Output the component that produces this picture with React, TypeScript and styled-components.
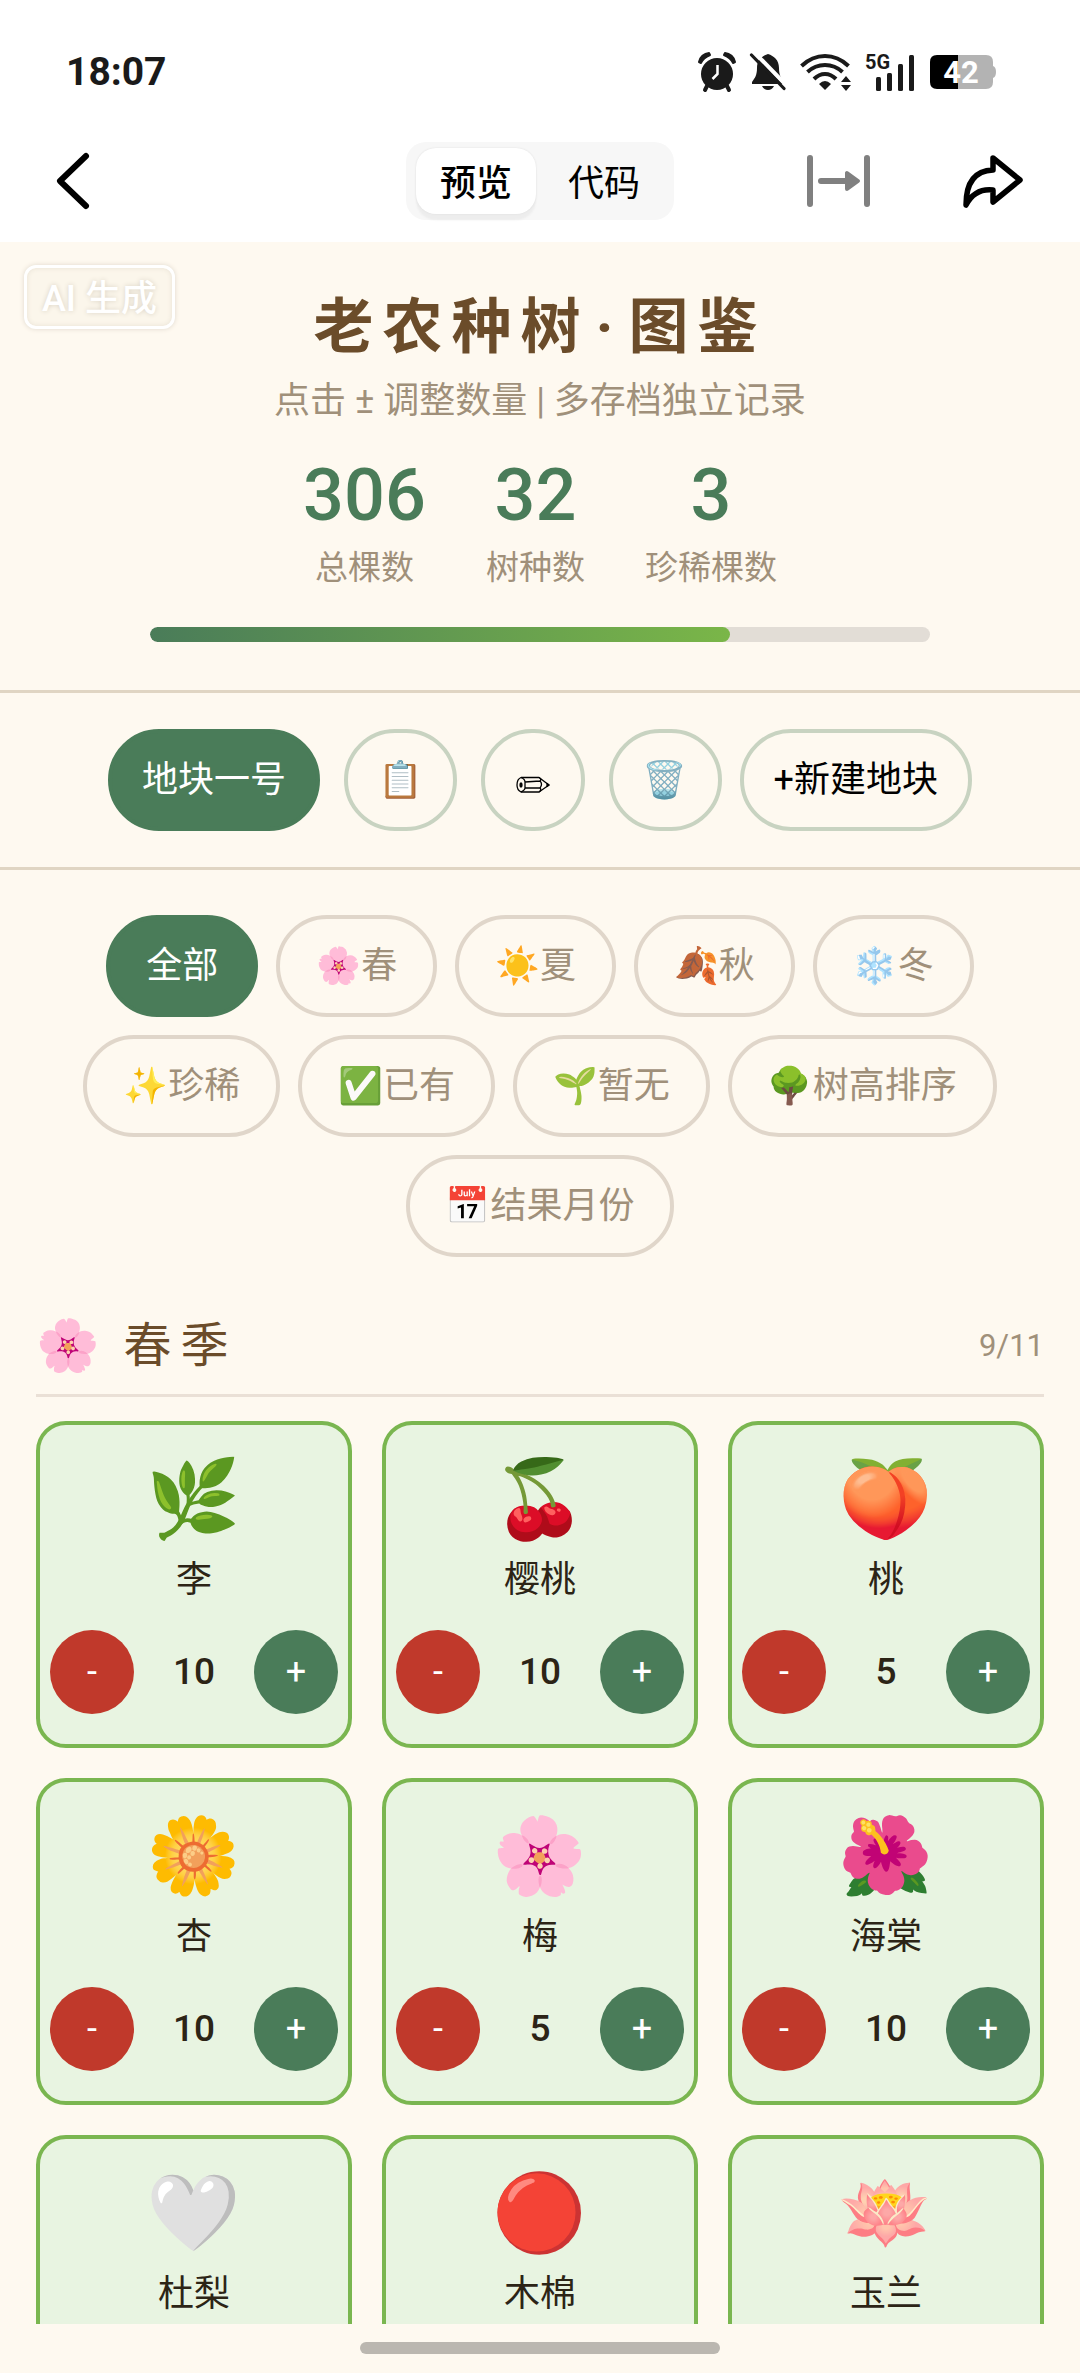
import React, { useState } from "react";
import styled, { createGlobalStyle } from "styled-components";

const GlobalStyle = createGlobalStyle`
  *, *::before, *::after { box-sizing: border-box; }
  body {
    margin: 0;
    background: #fef9f0;
    color: #2c2416;
    font-family: Roboto, "Noto Sans CJK SC", "Noto Color Emoji", sans-serif;
    font-size: 36px;
    line-height: 46px;
  }
  h1, h2, h3, p, dl, dd { margin: 0; font-size: inherit; font-weight: inherit; }
  button { font: inherit; color: inherit; cursor: pointer; }
  svg { display: block; overflow: visible; }
`;

const Screen = styled.div`
  display: flex;
  flex-direction: column;
  height: 100vh;
  overflow: hidden;
`;

const StatusBar = styled.header`
  display: flex;
  align-items: center;
  justify-content: space-between;
  height: 142px;
  padding: 2px 84px 0 66px;
  background: #fff;
  flex: none;
`;

const Clock = styled.time`
  color: #1a1a1a;
  font-size: 39px;
  font-weight: 700;
`;

const StatusIcons = styled.div`
  display: flex;
  align-items: center;
  gap: 14px;
`;

const Toolbar = styled.nav`
  display: grid;
  grid-template-columns: 1fr auto 1fr;
  align-items: center;
  height: 100px;
  padding: 0 56px 22px;
  background: #fff;
  flex: none;
`;

const IconButton = styled.button`
  display: flex;
  padding: 0;
  border: 0;
  background: none;
`;

const ToolbarActions = styled.div`
  display: flex;
  justify-content: flex-end;
  gap: 90px;
`;

const Segments = styled.div`
  display: flex;
  gap: 8px;
  padding: 6px 10px;
  border-radius: 20px;
  background: #f7f7f7;
`;

const Segment = styled.button<{ $active: boolean }>`
  width: 120px;
  height: 66px;
  padding: 6px 0 0;
  border: 0;
  border-radius: 20px;
  color: #000;
  font-weight: ${(p) => (p.$active ? 500 : 400)};
  background: ${(p) => (p.$active ? "#fff" : "none")};
  box-shadow: ${(p) => (p.$active ? "0 0 2px #ddd, 0 6px 2px #ededed" : "none")};
`;

const Page = styled.main`
  position: relative;
  flex: 1;
  min-height: 0;
  overflow-y: auto;
  scrollbar-width: none;
`;

const Watermark = styled.span`
  position: absolute;
  top: 23px;
  left: 24px;
  padding: 8px 15px 4px;
  border: 3px solid #fff;
  border-radius: 12px;
  color: #fff;
  font-weight: 500;
  background: #fbf6eb;
  box-shadow: 0 0 5px #e0d8cc, inset 0 0 5px #e8e0d4;
  text-shadow: 0 0 5px #d8d0c2;
`;

const Summary = styled.section`
  display: flex;
  flex-direction: column;
  align-items: center;
  padding: 48px 36px 48px;
  border-bottom: 3px solid #e0d5c3;
`;

const Title = styled.h1`
  color: #6b4c2a;
  font-size: 60px;
  font-weight: 700;
  line-height: 76px;
  letter-spacing: 9px;
`;

const TitleDot = styled.span`
  padding: 0 6px;
`;

const Subtitle = styled.p`
  margin-top: 12px;
  color: #a0907a;
`;

const Stats = styled.dl`
  display: flex;
  gap: 60px;
  margin-top: 23px;
`;

const Stat = styled.div`
  display: flex;
  flex-direction: column-reverse;
  align-items: center;
`;

const StatLabel = styled.dt`
  color: #a0907a;
  font-size: 33px;
`;

const StatValue = styled.dd`
  color: #4a7c59;
  font-size: 72px;
  font-weight: 500;
  line-height: 98px;
`;

const Track = styled.div`
  width: 780px;
  max-width: 100%;
  height: 15px;
  margin-top: 36px;
  border-radius: 9px;
  background: #e2ddd6;
  overflow: hidden;
`;

const Fill = styled.div`
  height: 100%;
  border-radius: 9px;
  background: linear-gradient(90deg, #4a7c59, #7ab648);
`;

const PlotBar = styled.section`
  display: flex;
  justify-content: center;
  gap: 18px;
  padding: 36px;
  border-bottom: 3px solid #e0d5c3;
`;

const PlotGroup = styled.div`
  display: flex;
  gap: 24px;
`;

const Pill = styled.button<{ $active?: boolean }>`
  height: 102px;
  border: 4px solid #c8d3c1;
  padding: 0 30px;
  border-radius: 60px;
  background: none;
  color: #000;
  white-space: nowrap;
  ${(p) => p.$active && "background: #4a7c59; border-color: #4a7c59; color: #fff;"}
`;

const FilterPill = styled(Pill)`
  padding: 0 36px;
  border-color: ${(p) => (p.$active ? "#4a7c59" : "#e0d6ca")};
  color: ${(p) => (p.$active ? "#fff" : "#a0907a")};
`;

const Filters = styled.section`
  display: flex;
  flex-wrap: wrap;
  justify-content: center;
  gap: 18px;
  padding: 45px 36px;
`;

const Season = styled.section`
  padding: 0 36px;
`;

const SeasonHead = styled.header`
  display: flex;
  align-items: center;
  gap: 24px;
  height: 95px;
  padding-bottom: 4px;
  border-bottom: 3px solid #eae0d6;
`;

const SeasonIcon = styled.span`
  font-size: 51px;
  line-height: 60px;
`;

const SeasonName = styled.h2`
  flex: 1;
  color: #6b4c2a;
  font-size: 48px;
  line-height: 60px;
  letter-spacing: 9px;
`;

const SeasonCount = styled.span`
  color: #a0907a;
  font-size: 31px;
`;

const Grid = styled.ul`
  display: grid;
  grid-template-columns: repeat(3, 1fr);
  gap: 30px;
  margin: 24px 0 0;
  padding: 0 0 24px;
  list-style: none;
`;

const Card = styled.li`
  display: flex;
  flex-direction: column;
  align-items: center;
  padding: 26px 10px 30px;
  border: 4px solid #7ab650;
  border-radius: 30px;
  background: #e8f4e1;
`;

const CardIcon = styled.span`
  font-size: 76px;
  line-height: 96px;
`;

const CardName = styled.h3`
  margin-top: 10px;
`;

const Stepper = styled.div`
  display: flex;
  align-items: center;
  justify-content: space-between;
  width: 100%;
  margin-top: 27px;
`;

const StepButton = styled.button<{ $tone: string }>`
  width: 84px;
  height: 84px;
  padding: 0;
  border: 0;
  border-radius: 50%;
  background: ${(p) => p.$tone};
  color: #fff;
`;

const Amount = styled.output`
  font-size: 37px;
  font-weight: 500;
`;

const HomeArea = styled.footer`
  display: flex;
  justify-content: center;
  flex: none;
  height: 49px;
  padding-top: 18px;
`;

const HomeIndicator = styled.div`
  width: 360px;
  height: 12px;
  border-radius: 6px;
  background: #bbb7b0;
`;

const BatteryLabel = styled.text`
  font: 700 31px Roboto, sans-serif;
  fill: #fff;
`;

const NetworkLabel = styled.text`
  font: 700 20px Roboto, sans-serif;
  fill: #1a1a1a;
`;

function AlarmIcon() {
  return (
    <svg width="38" height="40" viewBox="0 0 38 40" fill="#1a1a1a">
      <circle cx="19" cy="22" r="16" />
      <path d="M1 10A11 11 0 0 1 11 1L12 3Q5 6 3 11ZM37 10A11 11 0 0 0 27 1L26 3Q33 6 35 11Z" stroke="#1a1a1a" strokeWidth="2" strokeLinejoin="round" />
      <path d="M9 34L7 38M29 34L31 38" stroke="#1a1a1a" strokeWidth="4" strokeLinecap="round" />
      <path d="M19.500 13V22L14.500 27" fill="none" stroke="#fff" strokeWidth="2.500" />
    </svg>
  );
}

function MutedBellIcon() {
  return (
    <svg width="36" height="38" viewBox="0 0 36 38" fill="#1a1a1a">
      <path d="M18 1C12 3 7 7 7 15C7 22 5 25 2 29V31H34V29C31 25 29 22 29 15C29 7 24 3 18 1Z" />
      <path d="M12 33H24Q22 37 18 37Q14 37 12 33Z" />
      <path d="M4 -1L38 34" stroke="#fff" strokeWidth="4" />
      <path d="M1.500 2L34 35.500" stroke="#1a1a1a" strokeWidth="3.200" strokeLinecap="round" />
    </svg>
  );
}

function WifiIcon() {
  return (
    <svg width="52" height="38" viewBox="0 0 52 38" fill="none" stroke="#1a1a1a" strokeWidth="4">
      <path d="M1.500 13Q12 3 25 3T48.500 13M7.500 19Q15 12 25 12T42.500 19M14 26Q19 21 25 21T36 26" />
      <path d="M25 28Q28 28 31 31L25 37L19 31Q22 28 25 28Z" fill="#1a1a1a" stroke="none" />
      <path d="M41 29L46 23L51 29ZM41 32L46 38L51 32Z" fill="#1a1a1a" stroke="none" />
    </svg>
  );
}

function SignalIcon() {
  return (
    <svg width="50" height="38" viewBox="0 0 50 38">
      <NetworkLabel x="-1" y="16">5G</NetworkLabel>
      <g fill="#1a1a1a">
        <rect x="10" y="24" width="5" height="14" rx="1.500" />
        <rect x="21" y="20" width="5" height="18" rx="1.500" />
        <rect x="32" y="11" width="5" height="27" rx="1.500" />
        <rect x="43" y="2" width="5" height="36" rx="1.500" />
      </g>
    </svg>
  );
}

function BatteryIcon() {
  return (
    <svg width="66" height="34" viewBox="0 0 66 34">
      <path d="M28 0H56Q63 0 63 7V11Q66 12 66 17T63 23V27Q63 34 56 34H28Z" fill="#b3b3b3" />
      <path d="M28 0H7Q0 0 0 7V27Q0 34 7 34H28Z" fill="#000" />
      <BatteryLabel x="31" y="28" textAnchor="middle">42</BatteryLabel>
    </svg>
  );
}

function PencilIcon() {
  return (
    <svg width="36" height="46" viewBox="0 0 36 46" fill="none" stroke="#000" strokeWidth="1.300" strokeLinejoin="round">
      <path d="M6 20.500H24L34 28L24 35H6Q2 33 2 28Q2 22 6 20.500Z" />
      <path d="M6 20.500Q10 22 10 25V31Q10 33 6 35M10 25L25 24M10 31H25M24 20.500Q27 22 25 24Q28 27 25 31Q27 33 24 35" />
      <ellipse cx="6" cy="28" rx="1" ry="2" fill="#000" />
      <path d="M32 26.500L34 28L32 29.500Z" fill="#000" />
    </svg>
  );
}

const filters = ["全部", "🌸春", "☀️夏", "🍂秋", "❄️冬", "✨珍稀", "✅已有", "🌱暂无", "🌳树高排序", "📅结果月份"];

const trees = [
  { icon: "🌿", name: "李", amount: 10 },
  { icon: "🍒", name: "樱桃", amount: 10 },
  { icon: "🍑", name: "桃", amount: 5 },
  { icon: "🌼", name: "杏", amount: 10 },
  { icon: "🌸", name: "梅", amount: 5 },
  { icon: "🌺", name: "海棠", amount: 10 },
  { icon: "🤍", name: "杜梨", amount: 5 },
  { icon: "🔴", name: "木棉", amount: 5 },
  { icon: "🪷", name: "玉兰", amount: 5 },
];

const stats = [
  { label: "总棵数", value: 306 },
  { label: "树种数", value: 32 },
  { label: "珍稀棵数", value: 3 },
];

const TOTAL_SPECIES = 43;

export default function App() {
  const [view, setView] = useState("预览");
  const [filter, setFilter] = useState("全部");
  const [amounts, setAmounts] = useState(trees.map((t) => t.amount));
  const change = (index: number, by: number) =>
    setAmounts((list) => list.map((n, i) => (i === index ? Math.max(0, n + by) : n)));

  return (
    <Screen>
      <GlobalStyle />
      <StatusBar>
        <Clock>18:07</Clock>
        <StatusIcons>
          <AlarmIcon />
          <MutedBellIcon />
          <WifiIcon />
          <SignalIcon />
          <BatteryIcon />
        </StatusIcons>
      </StatusBar>
      <Toolbar>
        <IconButton aria-label="返回">
          <svg width="34" height="58" viewBox="0 0 34 58" fill="none" stroke="#000" strokeWidth="6" strokeLinecap="round" strokeLinejoin="round">
            <path d="M30 4L4 29L30 54" />
          </svg>
        </IconButton>
        <Segments>
          {["预览", "代码"].map((name) => (
            <Segment key={name} $active={view === name} onClick={() => setView(name)}>
              {name}
            </Segment>
          ))}
        </Segments>
        <ToolbarActions>
          <IconButton aria-label="宽度">
            <svg width="66" height="54" viewBox="0 0 66 54" fill="#808080" stroke="#808080" strokeLinecap="round" strokeLinejoin="round">
              <path d="M4 4V50M61 4V50M15 27H42" strokeWidth="6" />
              <path d="M41 19V35L52 27Z" strokeWidth="4" />
            </svg>
          </IconButton>
          <IconButton aria-label="分享">
            <svg width="62" height="54" viewBox="0 0 62 54" fill="none" stroke="#000" strokeWidth="5.500" strokeLinejoin="round">
              <path d="M31 4L58 26L31 48V36Q13 34 4 51Q4 17 31 16Z" />
            </svg>
          </IconButton>
        </ToolbarActions>
      </Toolbar>
      <Page>
        <Summary>
          <Title>
            老农种树<TitleDot>·</TitleDot>图鉴
          </Title>
          <Subtitle>点击 ± 调整数量 | 多存档独立记录</Subtitle>
          <Stats>
            {stats.map((s) => (
              <Stat key={s.label}>
                <StatLabel>{s.label}</StatLabel>
                <StatValue>{s.value}</StatValue>
              </Stat>
            ))}
          </Stats>
          <Track>
            <Fill style={{ width: `${(stats[1].value / TOTAL_SPECIES) * 100}%` }} />
          </Track>
        </Summary>
        <PlotBar>
          <PlotGroup>
            <Pill $active>地块一号</Pill>
            <Pill aria-label="复制">📋</Pill>
            <Pill aria-label="重命名">
              <PencilIcon />
            </Pill>
            <Pill aria-label="删除">🗑️</Pill>
          </PlotGroup>
          <Pill>+新建地块</Pill>
        </PlotBar>
        <Filters>
          {filters.map((name) => (
            <FilterPill key={name} $active={filter === name} onClick={() => setFilter(name)}>
              {name}
            </FilterPill>
          ))}
        </Filters>
        <Season>
          <SeasonHead>
            <SeasonIcon>🌸</SeasonIcon>
            <SeasonName>春季</SeasonName>
            <SeasonCount>9/11</SeasonCount>
          </SeasonHead>
          <Grid>
            {trees.map((tree, i) => (
              <Card key={tree.name}>
                <CardIcon>{tree.icon}</CardIcon>
                <CardName>{tree.name}</CardName>
                <Stepper>
                  <StepButton $tone="#c0392b" aria-label={`减少${tree.name}`} onClick={() => change(i, -1)}>
                    -
                  </StepButton>
                  <Amount>{amounts[i]}</Amount>
                  <StepButton $tone="#4a7c59" aria-label={`增加${tree.name}`} onClick={() => change(i, 1)}>
                    +
                  </StepButton>
                </Stepper>
              </Card>
            ))}
          </Grid>
        </Season>
        <Watermark>AI 生成</Watermark>
      </Page>
      <HomeArea>
        <HomeIndicator />
      </HomeArea>
    </Screen>
  );
}
